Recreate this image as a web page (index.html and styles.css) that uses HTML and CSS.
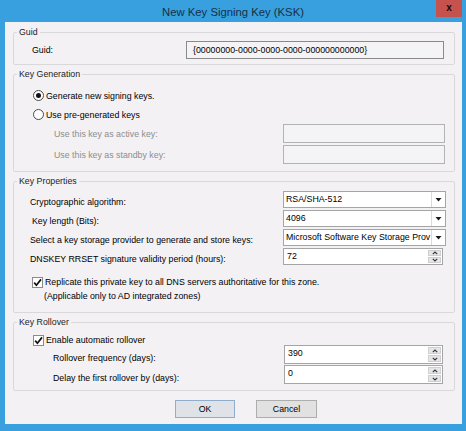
FILE: index.html
```html
<!DOCTYPE html>
<html>
<head>
<meta charset="utf-8">
<link rel="stylesheet" href="styles.css">
</head>
<body>
<div class="window">
  <div class="titlebar">
    <span class="title">New Key Signing Key (KSK)</span>
    <span class="close">x</span>
  </div>
  <div class="client">
    <fieldset class="group">
      <legend>Guid</legend>
      <div class="gbody gb-guid">
        <div class="row guid-row">
          <span class="lbl">Guid:</span>
          <div class="guid-field">{00000000-0000-0000-0000-000000000000}</div>
        </div>
      </div>
    </fieldset>

    <fieldset class="group g-gen">
      <legend>Key Generation</legend>
      <div class="gbody gb-gen">
        <div class="radio-row"><span class="radio checked"></span><span>Generate new signing keys.</span></div>
        <div class="radio-row"><span class="radio"></span><span>Use pre-generated keys</span></div>
        <div class="field-row"><span class="lbl disabled">Use this key as active key:</span><div class="dis-field"></div></div>
        <div class="field-row gap2"><span class="lbl disabled">Use this key as standby key:</span><div class="dis-field"></div></div>
      </div>
    </fieldset>

    <fieldset class="group g-props">
      <legend>Key Properties</legend>
      <div class="gbody gb-props">
        <div class="prop-row"><span class="lbl">Cryptographic algorithm:</span>
          <div class="combo"><span class="val">RSA/SHA-512</span><span class="arrow"><svg width="7" height="4" viewBox="0 0 7 4"><polygon points="0.5,0 6.5,0 3.5,3.5" fill="#1a1a1a"/></svg></span></div>
        </div>
        <div class="prop-row gap2"><span class="lbl shift2">Key length (Bits):</span>
          <div class="combo"><span class="val">4096</span><span class="arrow"><svg width="7" height="4" viewBox="0 0 7 4"><polygon points="0.5,0 6.5,0 3.5,3.5" fill="#1a1a1a"/></svg></span></div>
        </div>
        <div class="prop-row gap2"><span class="lbl">Select a key storage provider to generate and store keys:</span>
          <div class="combo"><span class="val">Microsoft Software Key Storage Prov</span><span class="arrow"><svg width="7" height="4" viewBox="0 0 7 4"><polygon points="0.5,0 6.5,0 3.5,3.5" fill="#1a1a1a"/></svg></span></div>
        </div>
        <div class="prop-row gap2"><span class="lbl">DNSKEY RRSET signature validity period (hours):</span>
          <div class="spin small"><span class="val">72</span>
            <span class="spinbtns"><span class="sb"><svg width="6" height="4" viewBox="0 0 6 4"><path d="M0.8 3.2 L3 1 L5.2 3.2" fill="none" stroke="#333" stroke-width="1.1"/></svg></span><span class="sb"><svg width="6" height="4" viewBox="0 0 6 4"><path d="M0.8 0.8 L3 3 L5.2 0.8" fill="none" stroke="#333" stroke-width="1.1"/></svg></span></span>
          </div>
        </div>
        <div class="check-row rep"><span class="checkbox"><svg width="9" height="9" viewBox="0 0 9 9"><path d="M1.2 4.6 L3.4 7.2 L8 1.4" fill="none" stroke="#111" stroke-width="1.7"/></svg></span><span>Replicate this private key to all DNS servers authoritative for this zone.</span></div>
        <div class="note-row">(Applicable only to AD integrated zones)</div>
      </div>
    </fieldset>

    <fieldset class="group g-roll">
      <legend>Key Rollover</legend>
      <div class="gbody gb-roll">
        <div class="check-row enable"><span class="checkbox"><svg width="9" height="9" viewBox="0 0 9 9"><path d="M1.2 4.6 L3.4 7.2 L8 1.4" fill="none" stroke="#111" stroke-width="1.7"/></svg></span><span>Enable automatic rollover</span></div>
        <div class="spin-row"><span class="lbl">Rollover frequency (days):</span>
          <div class="spin"><span class="val">390</span>
            <span class="spinbtns"><span class="sb"><svg width="6" height="4" viewBox="0 0 6 4"><path d="M0.8 3.2 L3 1 L5.2 3.2" fill="none" stroke="#333" stroke-width="1.1"/></svg></span><span class="sb"><svg width="6" height="4" viewBox="0 0 6 4"><path d="M0.8 0.8 L3 3 L5.2 0.8" fill="none" stroke="#333" stroke-width="1.1"/></svg></span></span>
          </div>
        </div>
        <div class="spin-row gap1"><span class="lbl">Delay the first rollover by (days):</span>
          <div class="spin"><span class="val">0</span>
            <span class="spinbtns"><span class="sb"><svg width="6" height="4" viewBox="0 0 6 4"><path d="M0.8 3.2 L3 1 L5.2 3.2" fill="none" stroke="#333" stroke-width="1.1"/></svg></span><span class="sb"><svg width="6" height="4" viewBox="0 0 6 4"><path d="M0.8 0.8 L3 3 L5.2 0.8" fill="none" stroke="#333" stroke-width="1.1"/></svg></span></span>
          </div>
        </div>
      </div>
    </fieldset>

    <div class="buttons">
      <div class="btn default">OK</div>
      <div class="btn cancel">Cancel</div>
    </div>
  </div>
</div>
</body>
</html>
```

FILE: styles.css
```css
html, body {
  margin: 0;
  padding: 0;
}
body {
  width: 466px;
  height: 431px;
  overflow: hidden;
  background: #38a0de;
  font-family: "Liberation Sans", Arial, sans-serif;
  font-size: 8.8px;
  color: #000;
}
.window {
  display: flex;
  flex-direction: column;
  height: 431px;
}
.titlebar {
  position: relative;
  height: 22px;
  display: flex;
  justify-content: center;
  align-items: center;
  padding-top: 2px;
  box-sizing: border-box;
}
.title {
  font-size: 11.3px;
  line-height: 14px;
  color: #15304a;
}
.close {
  position: absolute;
  left: 436px;
  top: 0;
  width: 26px;
  height: 17px;
  background: #c6524d;
  color: #1a0a0a;
  font-weight: bold;
  font-size: 10px;
  line-height: 15px;
  text-align: center;
}
.client {
  margin: 0 4px 0 5px;
  height: 402px;
  background: #f3f1f4;
  padding: 4px 7px 0 8px;
  box-sizing: border-box;
  display: flex;
  flex-direction: column;
}
.group {
  margin: 0;
  padding: 0;
  border: 1px solid #d9d8db;
  border-radius: 2px;
  min-width: 0;
}
.group legend {
  padding: 0 2px;
  margin-left: 3px;
  line-height: 13px;
  color: #1c1c1c;
}
.g-gen { margin-top: 3px; }
.g-props { margin-top: 3px; }
.g-roll { margin-top: 3px; }

.gb-guid { padding: 2px 0 5px 0; }
.gb-gen { padding: 5px 0 7px 0; }
.gb-props { padding: 3px 0 9px 0; }
.gb-roll { padding: 6px 0 6px 0; }

.lbl { flex: 1; white-space: nowrap; }
.disabled { color: #8d8d8d; }

.guid-row {
  display: flex;
  align-items: center;
  height: 18px;
  padding: 0 10px 0 18px;
}
.guid-field {
  width: 258px;
  height: 18px;
  box-sizing: border-box;
  border: 1px solid #8a8a8a;
  background: #f4f3f5;
  padding-left: 6px;
  line-height: 16px;
  white-space: nowrap;
}

.radio-row {
  display: flex;
  align-items: center;
  height: 19px;
  padding-left: 19px;
}
.radio {
  width: 11px;
  height: 11px;
  box-sizing: border-box;
  border: 1px solid #4a4a4a;
  border-radius: 50%;
  background: #fff;
  margin-right: 2px;
  display: flex;
  align-items: center;
  justify-content: center;
}
.radio.checked::after {
  content: "";
  width: 5px;
  height: 5px;
  border-radius: 50%;
  background: #111;
}
.field-row {
  display: flex;
  align-items: center;
  height: 19px;
  padding: 0 9px 0 40px;
}
.gap2 { margin-top: 2px; }
.gap1 { margin-top: 1px; }
.dis-field {
  width: 162px;
  height: 19px;
  box-sizing: border-box;
  border: 1px solid #b3b3b3;
  background: #f4f3f5;
}

.prop-row {
  display: flex;
  align-items: flex-end;
  height: 17px;
  padding: 0 8px 0 16px;
}
.prop-row .lbl { line-height: 12px; }
.shift2 { padding-left: 2px; }
.combo {
  width: 163px;
  height: 17px;
  box-sizing: border-box;
  border: 1px solid #a5a5a5;
  background: #fff;
  display: flex;
}
.combo .val {
  flex: 1;
  min-width: 0;
  white-space: nowrap;
  padding-left: 2px;
  line-height: 15px;
}
.combo .arrow {
  width: 13px;
  flex: none;
  border-left: 1px solid #dadada;
  display: flex;
  align-items: center;
  justify-content: center;
}
.spin {
  width: 159px;
  height: 19px;
  box-sizing: border-box;
  border: 1px solid #a5a5a5;
  background: #fff;
  display: flex;
}
.spin.small {
  width: 160px;
  height: 17px;
  margin-right: 3px;
}
.spin .val {
  flex: 1;
  padding-left: 3px;
  line-height: 15px;
}
.spinbtns {
  width: 13px;
  display: flex;
  flex-direction: column;
  padding: 1px 1px 1px 0;
  gap: 1px;
}
.sb {
  flex: 1;
  background: #e6e6e8;
  border: 1px solid #cfcfd2;
  display: flex;
  align-items: center;
  justify-content: center;
}

.check-row {
  display: flex;
  align-items: center;
  white-space: nowrap;
}
.checkbox {
  width: 11px;
  height: 11px;
  box-sizing: border-box;
  border: 1px solid #8b8b8b;
  background: #fff;
  margin-right: 2px;
  display: flex;
  align-items: center;
  justify-content: center;
  flex: none;
}
.check-row.rep {
  margin-top: 10px;
  height: 14px;
  padding-left: 18px;
}
.note-row {
  height: 14px;
  line-height: 14px;
  padding-left: 30px;
}
.check-row.enable {
  height: 10px;
  padding-left: 19px;
}
.spin-row {
  display: flex;
  align-items: flex-end;
  height: 19px;
  padding: 0 11px 0 39px;
}
.spin-row .lbl { line-height: 12px; }

.buttons {
  display: flex;
  gap: 21px;
  margin-top: 9px;
  padding-left: 162px;
}
.btn {
  height: 18px;
  box-sizing: border-box;
  border: 1px solid #adadad;
  background: #e1e1e1;
  text-align: center;
  line-height: 16px;
}
.btn.default {
  width: 60px;
  border-color: #8eaecb;
  background: #dfe2e6;
}
.btn.cancel { width: 61px; }
```
